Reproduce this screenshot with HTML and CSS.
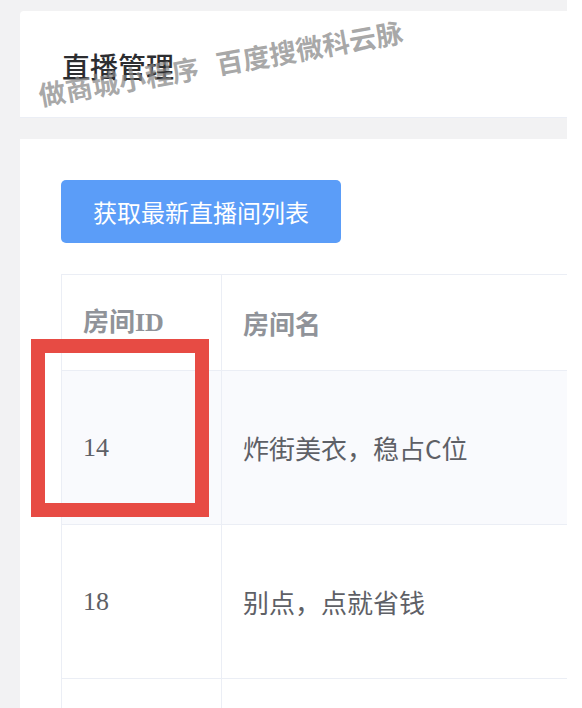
FILE: index.html
```html
<!DOCTYPE html>
<html lang="zh-CN">
<head>
<meta charset="utf-8">
<title>直播管理</title>
<link rel="stylesheet" href="styles.css">
</head>
<body>
<div class="viewport">
  <div class="head-card">
    <h1 class="title">直播管理</h1>
  </div>
  <div class="panel">
    <button class="btn-primary" type="button">获取最新直播间列表</button>
    <table class="room-table">
      <thead>
        <tr>
          <th class="col-id">房间ID</th>
          <th class="col-name">房间名</th>
        </tr>
      </thead>
      <tbody>
        <tr class="row-hover">
          <td class="col-id">14</td>
          <td class="col-name">炸街美衣，稳占C位</td>
        </tr>
        <tr>
          <td class="col-id">18</td>
          <td class="col-name">别点，点就省钱</td>
        </tr>
        <tr>
          <td class="col-id"></td>
          <td class="col-name"></td>
        </tr>
      </tbody>
    </table>
  </div>
  <div class="watermark"><span>做商城小程序</span><span class="wm-gap">百度搜微科云脉</span></div>
  <div class="highlight-box"></div>
</div>
</body>
</html>
```

FILE: styles.css
```css
html, body {
  margin: 0;
  padding: 0;
  background: #ffffff;
}

.viewport {
  position: relative;
  width: 567px;
  height: 708px;
  overflow: hidden;
  background: #f2f2f3;
  padding: 11px 0 0 20px;
  box-sizing: border-box;
  font-family: "Noto Sans CJK SC", "Noto Sans", sans-serif;
}

.head-card {
  height: 107px;
  background: #ffffff;
  border-top-left-radius: 4px;
  border-bottom: 1px solid #ebeef5;
  display: flex;
  align-items: center;
  padding: 4px 0 0 42px;
  box-sizing: border-box;
}

.title {
  margin: 0;
  font-size: 28px;
  font-weight: 500;
  line-height: 1;
  color: #2c2d30;
}

.panel {
  margin-top: 21px;
  background: #ffffff;
  padding: 41px 0 0 41px;
  height: 600px;
}

.btn-primary {
  display: block;
  width: 280px;
  height: 63px;
  border: 0;
  border-radius: 5px;
  background: #5b9df8;
  color: #ffffff;
  font-family: "Noto Sans CJK SC", "Noto Sans", sans-serif;
  font-size: 24px;
  line-height: 1;
  padding: 0;
}

.room-table {
  margin-top: 31px;
  width: 700px;
  border-collapse: collapse;
  border: 1px solid #ebeef5;
  color: #5e6066;
}

.room-table th,
.room-table td {
  border: 1px solid #ebeef5;
  text-align: left;
  vertical-align: middle;
  padding: 0 0 0 21px;
  font-size: 26px;
  line-height: 30px;
}

.room-table th {
  height: 95px;
  color: #909399;
  font-weight: 700;
  background: #ffffff;
}

.room-table td {
  height: 153px;
  font-weight: 400;
}

.room-table .col-id {
  width: 138px;
  font-family: "Liberation Serif", "Noto Sans CJK SC", serif;
}

.room-table .col-name {
  font-family: "Noto Sans CJK SC", "Noto Sans", sans-serif;
}

.room-table .row-hover td {
  background: #f9fafd;
}

.watermark {
  position: absolute;
  left: 36px;
  top: 49px;
  width: 372px;
  font-size: 27px;
  line-height: 27px;
  font-weight: 700;
  color: rgba(135, 135, 135, 0.72);
  white-space: nowrap;
  transform: rotate(-10deg);
  transform-origin: center center;
  font-family: "Noto Sans CJK SC", sans-serif;
}

.wm-gap {
  margin-left: 18px;
}

.highlight-box {
  position: absolute;
  left: 31px;
  top: 339px;
  width: 178px;
  height: 178px;
  border: 14px solid #e74b44;
  box-sizing: border-box;
}
```
